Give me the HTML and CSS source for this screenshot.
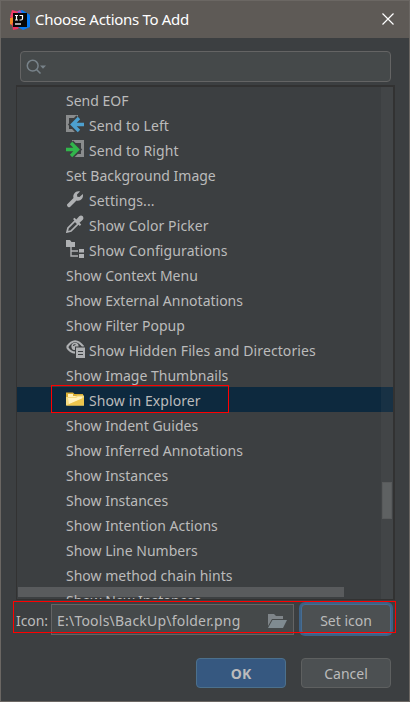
FILE: index.html
```html
<!DOCTYPE html>
<html lang="en">
<head>
<meta charset="utf-8">
<title>Choose Actions To Add</title>
<link rel="stylesheet" href="styles.css">
</head>
<body>
<div class="dialog">
  <header class="titlebar">
    <svg class="logo" width="20" height="20" viewBox="0 0 20 20">
      <path d="M2 0L9 2 6 11 0 7z" fill="#f43b68"/>
      <path d="M0 8L5 7 6 17 0 14z" fill="#f58a24"/>
      <path d="M2 13L10 15 8 19 3 20z" fill="#ee315f"/>
      <path d="M8 2L12 0 20 5V17L13 20 8 17z" fill="#087cf5"/>
      <path d="M6 2L10 0 12 3z" fill="#b84bb0"/>
      <path d="M3 3H17V17H3z" fill="#080808"/>
      <path d="M5 5.5H8M6.5 5.5V10M5 10H8M9.5 5.5H12.5V8.5Q12.5 10 11 10H9.5" stroke="#fff" stroke-width="1.2" fill="none"/>
      <path d="M5 14H11" stroke="#fff" stroke-width="1.3"/>
    </svg>
    <h1 class="title">Choose Actions To Add</h1>
    <svg class="close" width="12" height="12" viewBox="0 0 12 12"><path d="M.5 .5L11.5 11.5M11.5 .5L.5 11.5" stroke="#fff" stroke-width="1.2"/></svg>
  </header>
  <main class="content">
    <div class="search">
      <svg width="21" height="16" viewBox="0 0 21 16"><circle cx="6.7" cy="6.7" r="5.4" fill="none" stroke="#78838a" stroke-width="1.5"/><path d="M10.5 10.5L14.5 14.5" stroke="#78838a" stroke-width="1.6"/><path d="M14 6.5H20L17 9.8z" fill="#78838a"/></svg>
    </div>
    <div class="list">
      <div class="hbar"></div>
      <ul class="rows">
        <li><span>Send EOF</span></li>
        <li class="with-icon"><svg class="icon" viewBox="0 0 18 18"><path d="M12 1.5H1.5V15.5H12" fill="none" stroke="#8a8c8d" stroke-width="3"/><path d="M18 9.5H7M12.5 2.5L6 9.5L12.5 16.5" fill="none" stroke="#3c3f41" stroke-width="6"/><path d="M18 9.5H7M13 3L6.5 9.5L13 16" fill="none" stroke="#4da0cf" stroke-width="3.4"/></svg><span>Send to Left</span></li>
        <li class="with-icon"><svg class="icon" viewBox="0 0 18 18"><path d="M6 1.5H16.5V15.5H8" fill="none" stroke="#8a8c8d" stroke-width="3"/><path d="M0 9.5H11M5 2.5L12 9.5L5 16.5" fill="none" stroke="#3c3f41" stroke-width="6"/><path d="M0 9.5H11M5 3L11.5 9.5L5 16" fill="none" stroke="#31b64b" stroke-width="3.4"/></svg><span>Send to Right</span></li>
        <li><span>Set Background Image</span></li>
        <li class="with-icon"><svg class="icon" viewBox="0 0 18 18"><path d="M1 14.5L7.5 8C6.5 4.5 9.5 .5 14 1.5L11 4.5 11.3 6.8 13.5 7 16.8 4C18 8 14.5 11.5 10.5 10.5L4 17Q2.8 17.7 1.8 16.7T1 14.5z" fill="#afb1b3"/></svg><span>Settings...</span></li>
        <li class="with-icon"><svg class="icon" viewBox="0 0 18 18"><path d="M1 17L2 13 9 6 12 9 5 16z" fill="none" stroke="#afb1b3" stroke-width="1.7"/><path d="M7 4L8.5 2.7 10.3 4.5 13.2 1.2Q15-.2 16.8 1.2Q18 3 16.8 4.8L13.5 7.7 15.2 9.5 13.8 11z" fill="#afb1b3"/></svg><span>Show Color Picker</span></li>
        <li class="with-icon"><svg class="icon" viewBox="0 0 18 18"><path d="M0 0H4L5.5 2H9V7H0z" fill="#afb1b3"/><path d="M5 7V16H12M5 11H12" fill="none" stroke="#afb1b3" stroke-width="1.4"/><path d="M13 9H18V12.5H13zM13 14H18V18H13z" fill="#afb1b3"/></svg><span>Show Configurations</span></li>
        <li><span>Show Context Menu</span></li>
        <li><span>Show External Annotations</span></li>
        <li><span>Show Filter Popup</span></li>
        <li class="with-icon"><svg class="icon eye" viewBox="0 0 19 18"><path d="M1 7Q9-4.5 17.5 7M1 7Q4 12.5 9.5 12.7" fill="none" stroke="#afb1b3" stroke-width="2.2"/><circle cx="9" cy="6.4" r="3.6" fill="#afb1b3"/><path d="M7.5 6Q7.5 4.5 9.5 4.5" fill="none" stroke="#3c3f41" stroke-width="1.2"/><path d="M9 6.5H19V18H9z" fill="#3c3f41"/><path d="M10 7.5H19V18H10z" fill="#afb1b3"/><path d="M12 11.5H17M12 14.5H17" stroke="#3c3f41"/></svg><span>Show Hidden Files and Directories</span></li>
        <li><span>Show Image Thumbnails</span></li>
        <li class="with-icon selected"><svg class="icon" viewBox="0 0 18 18"><path d="M0 2.5H7L8.5 4H17L18 15H0z" fill="#d8ae34"/><path d="M2 4H7V6H16V14H2z" fill="#fff1bc"/><path d="M0 7H9L11 5.5H18V15.5H0z" fill="#f5dc82"/><path d="M2 8H10L12 6.7H16V9L3 14z" fill="#fff2bf"/><path d="M0 15.5L18 7.5V15.5z" fill="#edc64d"/></svg><span>Show in Explorer</span></li>
        <li><span>Show Indent Guides</span></li>
        <li><span>Show Inferred Annotations</span></li>
        <li><span>Show Instances</span></li>
        <li><span>Show Instances</span></li>
        <li><span>Show Intention Actions</span></li>
        <li><span>Show Line Numbers</span></li>
        <li><span>Show method chain hints</span></li>
        <li><span>Show New Instances</span></li>
      </ul>
      <div class="vbar"><div class="thumb"></div></div>
      <div class="mark mark-row"></div>
    </div>
    <div class="icon-form">
      <span class="label">Icon:</span>
      <div class="field"><span>E:\Tools\BackUp\folder.png</span>
        <svg width="19" height="14" viewBox="0 0 19 14"><path d="M0 0H6L8 2H15V5H4L0 12z" fill="#7f8589"/><path d="M4.5 6H19L15 14H0z" fill="#7f8b91"/></svg>
      </div>
      <div class="button focused">Set icon</div>
      <div class="mark mark-form"></div>
    </div>
    <footer class="actions">
      <div class="button primary">OK</div>
      <div class="button">Cancel</div>
    </footer>
  </main>
</div>
</body>
</html>
```
FILE: styles.css
```css
* { box-sizing: border-box; }
body { margin: 0; overflow: hidden; font: 14px/25px "Noto Sans", "Open Sans", sans-serif; color: #bbb; }
.dialog { width: 410px; height: 702px; border: 1px solid #6b6763; background: #3c3f41; }
.titlebar { display: flex; align-items: center; height: 37px; background: #5e5a56; padding: 0 15px 0 9px; }
.logo { flex: none; }
.title { flex: 1; margin: 0 0 0 5px; font-size: 15px; font-weight: 400; letter-spacing: -.3px; color: #fff; }
.close { flex: none; margin-top: -1px; }
.content { display: flex; flex-direction: column; }
.search { display: flex; align-items: center; height: 31px; margin: 13px 18px 0 19px; padding-left: 5px; border: 1px solid #646464; border-radius: 4px; background: #45494a; }
.list { position: relative; width: 379px; height: 515px; margin: 3px 0 0 15px; border: 2px solid #323232; border-width: 2px 2px 1px 1px; overflow: hidden; }
.rows { position: relative; list-style: none; margin: 0; padding: 0; }
.rows li { display: flex; align-items: center; height: 25px; padding-left: 49px; white-space: nowrap; letter-spacing: 0; }
.rows span { padding-top: 2px; }
.rows .with-icon { letter-spacing: .1px; }
.icon { width: 18px; height: 18px; margin: 0 5px 1px 0; flex: none; }
.eye { width: 19px; margin-right: 4px; }
.selected { background: #0d293e; }
.hbar { position: absolute; left: 1px; top: 500px; width: 326px; height: 10px; background: #595b5d; }
.vbar { position: absolute; right: 0; top: 0; width: 12px; height: 100%; background: rgba(128,128,128,.1); }
.thumb { width: 10px; height: 37px; margin: 395px 1px 0; background: #5e6162; border: 1px solid #585a5b; }
.mark { position: absolute; border: 1px solid #f00; }
.mark-row { left: 34px; top: 298px; width: 178px; height: 28px; }
.icon-form { position: relative; display: flex; align-items: flex-start; height: 36px; margin-top: 1px; padding: 3px 0 0 15px; }
.label { width: 35px; padding-top: 4px; white-space: nowrap; letter-spacing: -.1px; }
.field { display: flex; align-items: center; justify-content: space-between; width: 243px; height: 31px; padding: 2px 6px 0 5px; border: 1px solid #646464; background: #45494a; white-space: nowrap; letter-spacing: .22px; }
.button { display: flex; align-items: center; justify-content: center; width: 90px; height: 30px; border: 1px solid #5e6060; border-radius: 4px; background: #4c5052; }
.focused { margin-left: 7px; padding-top: 2px; border-color: #466d94; box-shadow: 0 0 0 2px #3d6185; }
.mark-form { left: 12px; top: 0; width: 383px; height: 32px; }
.actions { display: flex; gap: 15px; padding: 21px 0 0 195px; }
.primary { border-color: #4c708c; background: #365880; font-weight: 700; }
```
